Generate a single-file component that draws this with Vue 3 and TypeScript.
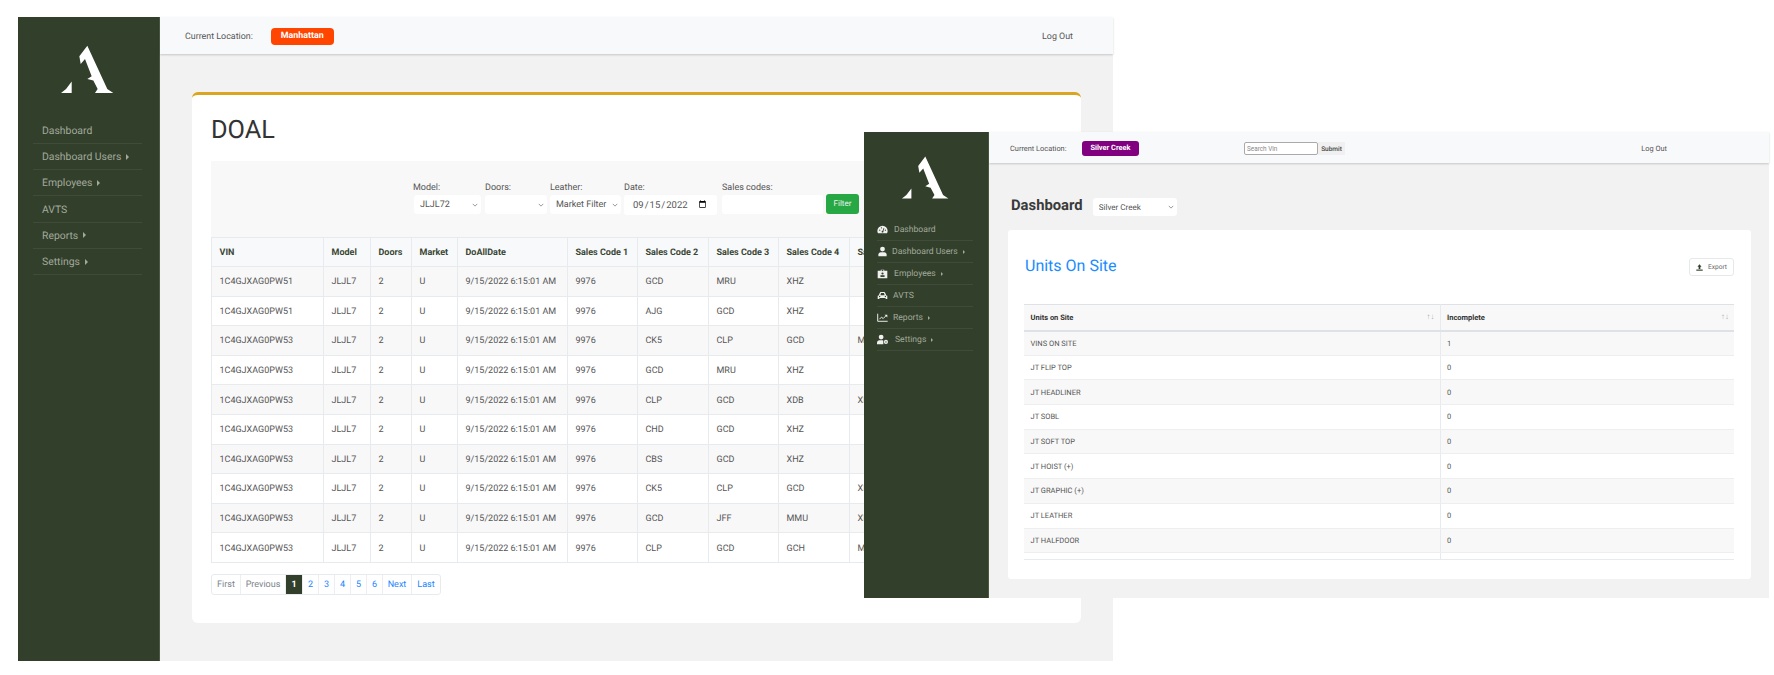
<script setup lang="ts">
const logoMain = 'M112 30L88 62L92 85L105 70L125 122L112 130L130 135L143 160L135 172H190L172 160Z'
const logoFoot = 'M33 172L48 160L65 138V172Z'

const backNav = [
  { label: 'Dashboard', caret: false },
  { label: 'Dashboard Users', caret: true },
  { label: 'Employees', caret: true },
  { label: 'AVTS', caret: false },
  { label: 'Reports', caret: true },
  { label: 'Settings', caret: true },
]

const frontNav = [
  { label: 'Dashboard', caret: false, icon: 'gauge', gap: 6 },
  { label: 'Dashboard Users', caret: true, icon: 'user', gap: 4 },
  { label: 'Employees', caret: true, icon: 'badge', gap: 6 },
  { label: 'AVTS', caret: false, icon: 'car', gap: 5 },
  { label: 'Reports', caret: true, icon: 'chart', gap: 5 },
  { label: 'Settings', caret: true, icon: 'cog', gap: 7 },
]

const headers = ['VIN', 'Model', 'Doors', 'Market', 'DoAllDate', 'Sales Code 1', 'Sales Code 2', 'Sales Code 3', 'Sales Code 4', 'Sales Code 5']

const rows: [string, string, string, string, string][] = [
  ['1C4GJXAG0PW51', 'GCD', 'MRU', 'XHZ', ''],
  ['1C4GJXAG0PW51', 'AJG', 'GCD', 'XHZ', ''],
  ['1C4GJXAG0PW53', 'CK5', 'CLP', 'GCD', 'MRU'],
  ['1C4GJXAG0PW53', 'GCD', 'MRU', 'XHZ', ''],
  ['1C4GJXAG0PW53', 'CLP', 'GCD', 'XDB', 'XHZ'],
  ['1C4GJXAG0PW53', 'CHD', 'GCD', 'XHZ', ''],
  ['1C4GJXAG0PW53', 'CBS', 'GCD', 'XHZ', ''],
  ['1C4GJXAG0PW53', 'CK5', 'CLP', 'GCD', 'XHZ'],
  ['1C4GJXAG0PW53', 'GCD', 'JFF', 'MMU', 'XHZ'],
  ['1C4GJXAG0PW53', 'CLP', 'GCD', 'GCH', 'MRU'],
]

const pages = [
  { label: 'First', kind: 'muted', w: 29 },
  { label: 'Previous', kind: 'muted', w: 45 },
  { label: '1', kind: 'active', w: 17 },
  { label: '2', kind: 'link', w: 16 },
  { label: '3', kind: 'link', w: 16 },
  { label: '4', kind: 'link', w: 16 },
  { label: '5', kind: 'link', w: 16 },
  { label: '6', kind: 'link', w: 16 },
  { label: 'Next', kind: 'link', w: 29 },
  { label: 'Last', kind: 'link', w: 28 },
]

const units = [
  ['VINS ON SITE', '1'],
  ['JT FLIP TOP', '0'],
  ['JT HEADLINER', '0'],
  ['JT SOBL', '0'],
  ['JT SOFT TOP', '0'],
  ['JT HOIST (+)', '0'],
  ['JT GRAPHIC (+)', '0'],
  ['JT LEATHER', '0'],
  ['JT HALFDOOR', '0'],
  ['', ''],
]
</script>

<template>
  <div class="desktop">
    <!-- Back window -->
    <section class="window back">
      <aside class="side side-back">
        <svg class="logo logo-back" viewBox="30 28 162 146" aria-hidden="true">
          <path :d="logoMain" />
          <path :d="logoFoot" />
        </svg>
        <nav class="nav-back">
          <a v-for="item in backNav" :key="item.label" class="nav-item">
            {{ item.label }}<i v-if="item.caret" class="caret"></i>
          </a>
        </nav>
      </aside>
      <div class="main">
        <header class="bar bar-back">
          <span>Current Location:</span>
          <span class="badge badge-orange">Manhattan</span>
          <span class="logout logout-back">Log Out</span>
        </header>
        <div class="content content-back">
          <div class="card card-back">
            <h1 class="doal">DOAL</h1>
            <form class="filters" @submit.prevent>
              <label class="fg fg-model"><span>Model:</span>
                <select class="ctl sel w-model"><option>JLJL72</option></select></label>
              <label class="fg"><span>Doors:</span>
                <select class="ctl sel w-doors"><option></option></select></label>
              <label class="fg"><span>Leather:</span>
                <select class="ctl sel w-leather"><option>Market Filter</option></select></label>
              <label class="fg fg-date"><span>Date:</span>
                <input class="ctl w-date" type="date" value="2022-09-15" /></label>
              <label class="fg"><span>Sales codes:</span>
                <input class="ctl w-codes" type="text" /></label>
              <button class="filter-btn" type="button">Filter</button>
            </form>
            <table class="doal-table">
              <colgroup>
                <col class="c1" /><col class="c2" /><col class="c3" /><col class="c4" /><col class="c5" />
                <col class="c6" /><col class="c7" /><col class="c6" /><col class="c7" /><col />
              </colgroup>
              <thead>
                <tr><th v-for="h in headers" :key="h">{{ h }}</th></tr>
              </thead>
              <tbody>
                <tr v-for="(r, i) in rows" :key="i">
                  <td>{{ r[0] }}</td><td>JLJL7</td><td>2</td><td>U</td>
                  <td>9/15/2022 6:15:01 AM</td><td>9976</td>
                  <td>{{ r[1] }}</td><td>{{ r[2] }}</td><td>{{ r[3] }}</td><td>{{ r[4] }}</td>
                </tr>
              </tbody>
            </table>
            <div class="pager">
              <a v-for="p in pages" :key="p.label" :class="['page', p.kind]" :style="{ width: p.w + 'px' }">{{ p.label }}</a>
            </div>
          </div>
        </div>
      </div>
    </section>

    <!-- Front window -->
    <section class="window front">
      <aside class="side side-front">
        <svg class="logo logo-front" viewBox="30 28 162 146" aria-hidden="true">
          <path :d="logoMain" />
          <path :d="logoFoot" />
        </svg>
        <nav class="nav-front">
          <a v-for="item in frontNav" :key="item.label" class="nav-item">
            <svg class="ico" viewBox="0 0 16 16" aria-hidden="true">
              <template v-if="item.icon === 'gauge'">
                <path d="M8 2.500a7.500 7.500 0 0 0-7.500 7.500c0 1.400.4 2.600 1 3.600h13c.6-1 1-2.200 1-3.600A7.500 7.500 0 0 0 8 2.500z" />
                <path class="cut" d="M8.600 11L10 6" />
                <circle class="dot" cx="8" cy="11.200" r="1.300" />
                <circle class="dot" cx="4" cy="9" r=".9" />
                <circle class="dot" cx="6.500" cy="5.500" r=".9" />
                <circle class="dot" cx="12.200" cy="9" r=".9" />
              </template>
              <template v-else-if="item.icon === 'user'">
                <circle cx="8" cy="4.500" r="3.500" />
                <path d="M2 15v-2.500C2 10.500 3.500 9 5.500 9h5c2 0 3.500 1.500 3.500 3.500V15z" />
              </template>
              <template v-else-if="item.icon === 'badge'">
                <path d="M1 4h4.500V2.500h5V4H15v11H1z" />
                <rect class="dot" x="6.800" y="3" width="2.400" height="1.500" />
                <circle class="dot" cx="8" cy="8" r="1.600" />
                <rect class="dot" x="5" y="10.500" width="6" height="2.500" />
              </template>
              <template v-else-if="item.icon === 'car'">
                <path d="M1 8.500l1.500-.5L4 4.500C4.300 3.700 5 3 6 3h4c1 0 1.700.7 2 1.500L13.500 8l1.500.5V13h-2.500v-1.500h-9V13H1z" />
                <path class="dot" d="M4.800 7.500l.9-2.500c.1-.3.3-.5.6-.5h3.400c.3 0 .5.2.6.5l.9 2.500z" />
                <circle class="dot" cx="3.800" cy="9.500" r="1" />
                <circle class="dot" cx="12.200" cy="9.500" r="1" />
              </template>
              <template v-else-if="item.icon === 'chart'">
                <path class="line" d="M1 2.500V13.500H15.500" />
                <path class="line" d="M3.500 10.500L6.500 7.500L9 9.500L13.500 5" />
                <path d="M11 4H15V8z" />
              </template>
              <template v-else>
                <circle cx="6" cy="4.500" r="3.500" />
                <path d="M0 15v-2.500C0 10.500 1.500 9 3.500 9h4.500c.9 0 1.200.3 1.200.8V15z" />
                <circle class="gear" cx="13" cy="11.500" r="2" />
              </template>
            </svg>
            <span class="nav-label" :style="{ marginLeft: item.gap + 'px' }">{{ item.label }}</span><i v-if="item.caret" class="caret caret-sm"></i>
          </a>
        </nav>
      </aside>
      <div class="main">
        <header class="bar bar-front">
          <span>Current Location:</span>
          <span class="badge badge-purple">Silver Creek</span>
          <form class="search" @submit.prevent>
            <input class="search-input" type="text" placeholder="Search Vin" />
            <button class="search-btn" type="button">Submit</button>
          </form>
          <span class="logout logout-front">Log Out</span>
        </header>
        <div class="content content-front">
          <div class="page-head">
            <h2 class="dash-title">Dashboard</h2>
            <select class="ctl sel site"><option>Silver Creek</option></select>
          </div>
          <div class="card card-front">
            <div class="card-head">
              <h3 class="units-title">Units On Site</h3>
              <button class="export" type="button">
                <svg class="export-ico" viewBox="0 0 12 12" aria-hidden="true">
                  <path d="M6 .5L9.500 4.500H7.500V8.500H4.500V4.500H2.500z" />
                  <rect x=".5" y="9.500" width="11" height="2" />
                </svg>
                Export
              </button>
            </div>
            <div class="units-scroll">
              <table class="units">
                <thead>
                  <tr>
                    <th>Units on Site<span class="sort">↑↓</span></th>
                    <th>Incomplete<span class="sort">↑↓</span></th>
                  </tr>
                </thead>
                <tbody>
                  <tr v-for="(u, i) in units" :key="i">
                    <td>{{ u[0] }}</td><td>{{ u[1] }}</td>
                  </tr>
                </tbody>
              </table>
            </div>
          </div>
        </div>
      </div>
    </section>
  </div>
</template>

<style scoped>
.desktop {
  position: relative;
  width: 1774px;
  height: 675px;
  overflow: hidden;
  background: #fff;
  font-family: Roboto, "Liberation Sans", sans-serif;
  color: #444;
  text-rendering: geometricPrecision;
  opacity: 0.999;
}
.ctl, button { text-rendering: inherit; }
.window {
  position: absolute;
  display: flex;
  background: #f2f2f2;
}
.back { left: 18px; top: 17px; width: 1095px; height: 644px; }
.front { left: 864px; top: 132px; width: 905px; height: 466px; }

.side {
  flex: none;
  background: #323f2b;
  border-right: 1px solid #4a5a42;
  box-sizing: border-box;
}
.side-back { width: 142px; padding: 28px 17px 0 15px; }
.side-front { width: 125px; padding: 24px 15px 0 13px; }
.logo { display: block; }
.logo path { fill: #fff; }
.logo-back { width: 54px; height: 48.6px; margin: 0 0 24px 27px; }
.logo-front { width: 48px; height: 43.2px; margin: 0 0 20px 24px; }

.nav-item {
  display: flex;
  align-items: center;
  box-sizing: border-box;
  border-bottom: 1px solid rgba(255, 255, 255, 0.07);
  color: #a2aa9c;
}
.nav-back .nav-item { height: 26.3px; padding-left: 9px; font-size: 10.4px; }
.nav-front .nav-item { height: 22px; font-size: 8.6px; }
.caret {
  display: inline-block;
  margin-left: 5px;
  border-left: 3px solid #a2aa9c;
  border-top: 3px solid transparent;
  border-bottom: 3px solid transparent;
}
.caret-sm { border-left-width: 2.5px; border-top-width: 2.5px; border-bottom-width: 2.5px; }
.ico { flex: none; width: 11px; height: 11px; }
.ico path, .ico circle, .ico rect { fill: #f0f0ee; }
.ico .dot { fill: #323f2b; }
.ico .cut { fill: none; stroke: #323f2b; stroke-width: 1.2; }
.ico .line { fill: none; stroke: #f0f0ee; stroke-width: 1.4; }
.ico .gear { fill: none; stroke: #f0f0ee; stroke-width: 2; }

.main { flex: 1; min-width: 0; display: flex; flex-direction: column; }
.bar {
  flex: none;
  display: flex;
  align-items: center;
  box-sizing: border-box;
  background: #f8f9fa;
  box-shadow: 0 1px 2px rgba(0, 0, 0, 0.18);
  position: relative;
  color: #555;
  padding-top: 2px;
}
.bar-back { height: 37px; padding-left: 25px; font-size: 8.9px; }
.bar-front { height: 31px; padding-left: 21px; font-size: 7.4px; }
.badge { color: #fff; font-weight: 700; text-align: center; }
.badge-orange { margin-left: 18px; width: 63px; line-height: 17px; background: #ff4500; border-radius: 4px; }
.badge-purple { margin-left: 15.500px; width: 57px; line-height: 14.500px; background: #800080; border-radius: 3px; }
.logout { margin-left: auto; }
.logout-back { margin-right: 40px; }
.logout-front { margin-right: 102px; }

.content { flex: 1; min-height: 0; }
.content-back { padding: 38px 32px; }
.content-front { padding: 35px 18px 19px 19px; }

.card { background: #fff; box-sizing: border-box; }
.card-back {
  height: 531px;
  padding: 21px 19px 0;
  border-top: 3px solid #daa520;
  border-radius: 6px;
}
.doal { margin: 0 0 15px; font-size: 25.300px; line-height: 30px; font-weight: 400; color: #333; }

.filters {
  display: flex;
  align-items: flex-end;
  height: 76px;
  box-sizing: border-box;
  padding: 0 0 23px 202px;
  background: #f8f8f8;
}
.fg { display: flex; flex-direction: column; margin-right: 3px; font-size: 9px; color: #555; }
.fg span { margin-bottom: 1px; line-height: 12px; }
.fg-model { margin-right: 4px; }
.fg-date { margin-right: 5px; }
.ctl {
  box-sizing: border-box;
  border: none;
  border-radius: 3px;
  background: #fff;
  height: 19px;
  padding: 0 0 0 6px;
  font: 9px Roboto, sans-serif;
  color: #555;
}
.sel {
  appearance: none;
  background: #fff url("data:image/svg+xml,%3Csvg xmlns='http://www.w3.org/2000/svg' viewBox='0 0 8 5'%3E%3Cpath d='M1 1l3 3 3-3' fill='none' stroke='%23777' stroke-width='1'/%3E%3C/svg%3E") no-repeat right 3px center / 6px 4px;
}
.w-model { width: 67px; margin-left: 1px; }
.w-doors { width: 62px; }
.w-leather { width: 71px; }
.w-date { width: 93px; height: 20px; margin-bottom: -1px; padding: 0 8px; font-size: 9.500px; }
.w-codes { width: 101px; }
.filter-btn {
  width: 33px;
  height: 20px;
  margin-bottom: .5px;
  border: none;
  border-radius: 3px;
  background: #28a745;
  color: #e8f5ea;
  font: 8px Roboto, sans-serif;
  padding: 0;
}

.doal-table {
  width: 851px;
  table-layout: fixed;
  border-collapse: collapse;
  font-size: 9px;
  color: #555;
}
.c1 { width: 112px; }
.c2 { width: 47px; }
.c3 { width: 41px; }
.c4 { width: 46px; }
.c5 { width: 110px; }
.c6 { width: 70px; }
.c7 { width: 71px; }
.doal-table th, .doal-table td {
  box-sizing: border-box;
  border: 1px solid #e8ebed;
  padding: 2px 0 0 7.500px;
  text-align: left;
  white-space: nowrap;
  overflow: hidden;
}
.doal-table th { height: 29px; background: #f8f9fa; color: #3a4735; font-weight: 700; }
.doal-table td { height: 29.600px; }
.doal-table tbody tr:nth-child(odd) { background: #f8f8f8; }

.pager {
  display: flex;
  box-sizing: border-box;
  width: max-content;
  height: 21px;
  margin-top: 11px;
  border: 1px solid #e8ebed;
  border-radius: 3px;
  font-size: 9px;
  line-height: 20px;
}
.page { box-sizing: border-box; height: 19px; text-align: center; border-right: 1px solid #eceef0; }
.page:last-child { border-right: none; }
.muted { color: #7b848c; }
.link { color: #1a85ff; }
.active { background: #323f2b; color: #fff; font-weight: 700; }

.page-head { display: flex; align-items: center; height: 18px; padding-left: 3px; }
.dash-title { margin: -4px 10px 0 0; font-size: 14.800px; font-weight: 700; color: #3a3a3a; }
.site { width: 84px; font-size: 8.100px; height: 18px; }

.card-front {
  height: 349px;
  margin-top: 14px;
  padding: 0 17px 0 16px;
  border-radius: 3px;
}
.card-head {
  display: flex;
  justify-content: space-between;
  height: 74px;
  padding-top: 28px;
  box-sizing: border-box;
}
.units-title { margin: -3px 0 0 1px; font-size: 16px; line-height: 22px; font-weight: 400; color: #1a8cff; }
.export {
  display: flex;
  align-items: center;
  justify-content: center;
  gap: 5px;
  width: 45px;
  height: 18px;
  padding: 0;
  background: #fff;
  border: 1px solid #e6e8ea;
  border-radius: 3px;
  font: 6.600px Roboto, sans-serif;
  color: #666;
}
.export-ico { width: 7px; height: 7px; }
.export-ico path, .export-ico rect { fill: #323f2b; }

.units-scroll {
  height: 256px;
  overflow: hidden;
  border-bottom: 1px solid #e8ebed;
  box-sizing: border-box;
}
.units {
  width: 100%;
  table-layout: fixed;
  border-collapse: collapse;
  font-size: 7.500px;
  color: #555;
}
.units th, .units td {
  box-sizing: border-box;
  padding: 0 0 0 6.500px;
  text-align: left;
  border-right: 1px solid #e8ebed;
}
.units th:first-child, .units td:first-child { width: 416px; }
.units th:last-child, .units td:last-child { border-right: none; }
.units th {
  position: relative;
  height: 26px;
  background: #f8f8f8;
  border-top: 1px solid #dee2e6;
  border-bottom: 2px solid #dee2e6;
  color: #333;
  font-weight: 700;
}
.units td { height: 24.700px; border-bottom: 1px solid #eceef0; }
.units tbody tr:nth-child(odd) { background: #f8f8f8; }
.sort { position: absolute; right: 5px; top: 7px; font-size: 8px; font-weight: 400; color: #aeb2b6; }

.search { display: flex; align-items: center; margin-left: 105px; }
.search-input {
  box-sizing: border-box;
  width: 74px;
  height: 13.500px;
  padding: 0 2px;
  border: 1px solid #aaa;
  border-radius: 2px;
  background: #fff;
  font: 6.400px Roboto, sans-serif;
}
.search-input::placeholder { color: #888; }
.search-btn {
  width: 27px;
  height: 13.500px;
  padding: 0;
  border: none;
  background: #f0f0f0;
  color: #444;
  font: 500 6.500px Roboto, sans-serif;
}
</style>

<style>
html, body { margin: 0; background: #fff; overflow: hidden; }
</style>
